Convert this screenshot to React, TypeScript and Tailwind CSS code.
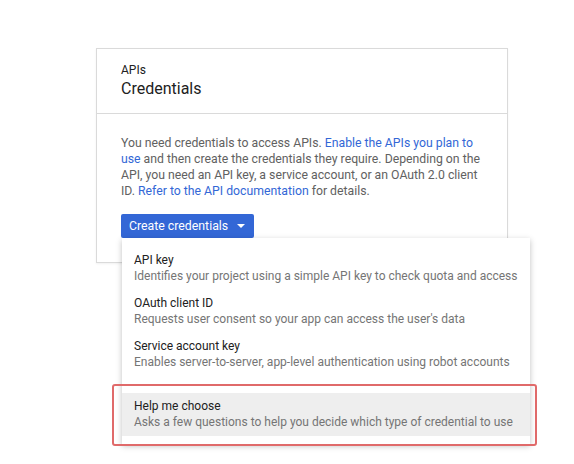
import React from "react";

const items = [
  { t: "API key", d: "Identifies your project using a simple API key to check quota and access" },
  { t: "OAuth client ID", d: "Requests user consent so your app can access the user's data" },
  { t: "Service account key", d: "Enables server-to-server, app-level authentication using robot accounts" },
];

export default function App() {
  return (
    <div
      className="min-h-[464px] w-[574px] bg-white pt-[48px] pl-[96px]"
      style={{ fontFamily: "Roboto, 'Liberation Sans', sans-serif" }}
    >
      <div className="relative w-[412px] border border-[#dadada] bg-white shadow-[0_1px_2px_rgba(0,0,0,0.06)]">
        <div className="px-[24px] pt-[13px] pb-[13px] border-b border-[#dadada]">
          <div className="text-[12px] leading-[16px] text-[#212121]">APIs</div>
          <div className="text-[16px] leading-[22px] text-[#212121]">Credentials</div>
        </div>
        <div className="px-[24px] pt-[21px] pb-[24px]">
          <p className="text-[12.25px] leading-[16px] text-[#616161]">
            You need credentials to access APIs.{" "}
            <span className="text-[#3367d6]">Enable the APIs you plan to use</span> and then create the
            credentials they require. Depending on the API, you need an API key, a service account, or an
            OAuth 2.0 client ID. <span className="text-[#3367d6]">Refer to the API documentation</span> for
            details.
          </p>
          <div className="relative mt-[15px] inline-block">
            <button className="flex h-[24px] items-center rounded-[2px] bg-[#3367d6] pl-[8px] pr-[9px] text-[12.3px] text-white">
              Create credentials
              <svg width="8" height="4" viewBox="0 0 8 4" className="ml-[9px]">
                <path d="M0 0 L8 0 L4 4 Z" fill="#ffffff" />
              </svg>
            </button>
            <div className="absolute left-[1px] top-full z-10 w-[408px] bg-white py-[8px] shadow-[0_2px_6px_rgba(0,0,0,0.25)]">
              {items.map((it) => (
                <div key={it.t} className="pl-[12px] pr-[8px] pt-[6px] pb-[5px]">
                  <div className="text-[12px] leading-[16px] text-[#212121]">{it.t}</div>
                  <div className="text-[12px] leading-[16px] text-[#757575] whitespace-nowrap">{it.d}</div>
                </div>
              ))}
              <div className="h-[18px]" />
              <div className="bg-[#eeeeee] pl-[12px] pr-[8px] pt-[5px] pb-[6px]">
                <div className="text-[12px] leading-[16px] text-[#212121]">Help me choose</div>
                <div className="text-[12px] leading-[16px] text-[#757575] whitespace-nowrap">
                  Asks a few questions to help you decide which type of credential to use
                </div>
              </div>
              <div className="pointer-events-none absolute left-[-10px] top-[146px] h-[62px] w-[425px] rounded-[3px] border-2 border-[#e06a6a]" />
            </div>
          </div>
        </div>
      </div>
    </div>
  );
}
